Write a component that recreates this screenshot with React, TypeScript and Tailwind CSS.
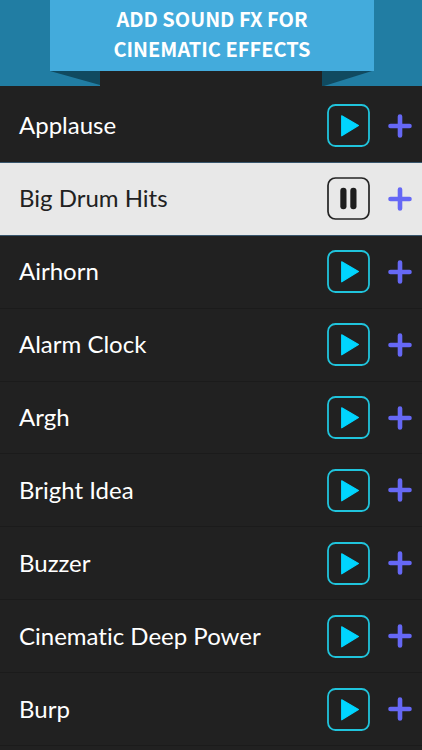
import { useState } from "react";

const sounds = [
  "Applause",
  "Big Drum Hits",
  "Airhorn",
  "Alarm Clock",
  "Argh",
  "Bright Idea",
  "Buzzer",
  "Cinematic Deep Power",
  "Burp",
];

function PlayIcon() {
  return (
    <svg viewBox="0 0 43 43" className="size-[43px]" aria-hidden="true">
      <rect x="1" y="1" width="41" height="41" rx="7.5" fill="none" stroke="#20c4dc" strokeWidth="1.8" />
      <path d="M14.7 11.8 31.4 21.6 14.7 31.8Z" fill="#00d5ff" stroke="#00d5ff" strokeWidth="1.2" strokeLinejoin="round" />
    </svg>
  );
}

function PauseIcon() {
  return (
    <svg viewBox="0 0 43 43" className="size-[43px]" aria-hidden="true">
      <rect x="1" y="1" width="41" height="41" rx="7.5" fill="none" stroke="#242424" strokeWidth="1.7" />
      <rect x="13.3" y="10.8" width="6.2" height="21.4" rx="3" fill="#1d1d1d" />
      <rect x="23.3" y="10.8" width="6.2" height="21.4" rx="3" fill="#1d1d1d" />
    </svg>
  );
}

function PlusIcon() {
  return (
    <svg viewBox="0 0 24 24" className="size-6" aria-hidden="true">
      <path d="M12 2.5v19M2.5 12h19" fill="none" stroke="#6668f5" strokeWidth="4.6" strokeLinecap="round" />
    </svg>
  );
}

function Banner() {
  return (
    <header className="relative h-[86px] shrink-0">
      <div className="flex h-full justify-between">
        <div className="w-[100px] bg-[#217da3]" />
        <div className="w-[100px] bg-[#217da3]" />
      </div>
      <div className="absolute top-0 right-12 left-[50px]">
        <h1 className="flex h-[71px] flex-col items-center justify-center bg-[#43abdc] pb-1 text-center font-['Marker_Felt','Noto_Sans_CJK_SC',sans-serif] text-xl leading-[30px] font-bold whitespace-nowrap text-white">
          <span className="leading-[30px]">ADD SOUND FX FOR</span>
          <span className="leading-[30px]">CINEMATIC EFFECTS</span>
        </h1>
        <div className="flex justify-between">
          <svg viewBox="0 0 50 15" className="h-[15px] w-[50px]" aria-hidden="true">
            <path d="M0 0H50V14Z" fill="#104a60" />
          </svg>
          <svg viewBox="0 0 52 15" className="h-[15px] w-[52px]" aria-hidden="true">
            <path d="M50 0H0V15H2Z" fill="#104a60" />
          </svg>
        </div>
      </div>
    </header>
  );
}

export default function App() {
  const [playing, setPlaying] = useState("Big Drum Hits");

  return (
    <main className="flex min-h-screen flex-col bg-[#212121] pb-1 font-['Avenir','Lato',sans-serif]">
      <Banner />
      <ul className="flex flex-1 flex-col pt-1">
        {sounds.map((name) => {
          const active = name === playing;
          return (
            <li
              key={name}
              className={
                active
                  ? "flex min-h-[72px] flex-1 items-center border-b border-[#38566d] bg-[#e8e8e8] pr-[10px] pl-[19px] text-[#212121] shadow-[0_-1px_0_#38566d]"
                  : "flex min-h-[72px] flex-1 items-center border-b border-[#1b1b1b] pr-[10px] pl-[19px] text-white"
              }
            >
              <span className="flex-1 pb-px text-2xl [font-variant-ligatures:none]">{name}</span>
              <button
                type="button"
                aria-label={active ? `Pause ${name}` : `Play ${name}`}
                onClick={() => setPlaying(active ? "" : name)}
                className="mr-[18px]"
              >
                {active ? <PauseIcon /> : <PlayIcon />}
              </button>
              <button type="button" aria-label={`Add ${name}`}>
                <PlusIcon />
              </button>
            </li>
          );
        })}
      </ul>
    </main>
  );
}
